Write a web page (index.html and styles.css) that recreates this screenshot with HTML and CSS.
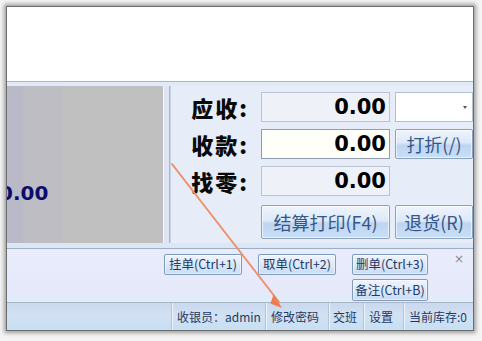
FILE: index.html
```html
<!DOCTYPE html>
<html>
<head>
<meta charset="utf-8">
<link rel="stylesheet" href="styles.css">
</head>
<body>
<div class="win">
  <div class="top"></div>
  <div class="main">
    <div class="display"><span class="bignum">0.00</span></div>
    <div class="splitter"></div>
    <div class="pay">
      <div class="lbl">应收:</div>
      <div class="inp ro">0.00</div>
      <div class="combo"><span class="caret"></span></div>
      <div class="lbl">收款:</div>
      <div class="inp edit">0.00</div>
      <div class="btn big">打折(/)</div>
      <div class="lbl">找零:</div>
      <div class="inp ro">0.00</div>
      <div></div>
      <div></div>
      <div class="btn big last">结算打印(F4)</div>
      <div class="btn big last">退货(R)</div>
    </div>
  </div>
  <div class="tools">
    <div class="tbtns">
      <div class="btn sm">挂单(Ctrl+1)</div>
      <div class="btn sm">取单(Ctrl+2)</div>
      <div class="btn sm">删单(Ctrl+3)</div>
      <div class="btn sm c3">备注(Ctrl+B)</div>
    </div>
    <span class="close">×</span>
  </div>
  <div class="status">
    <div class="item w1">收银员：admin</div>
    <div class="item w2">修改密码</div>
    <div class="item w3">交班</div>
    <div class="item w4">设置</div>
    <div class="item w5">当前库存:0</div>
  </div>
  <svg class="overlay" width="466" height="323" viewBox="0 0 466 323">
    <line x1="165" y1="157" x2="272" y2="295" stroke="#f0906a" stroke-width="2" stroke-linecap="round"/>
    <polygon points="275,301 266.5,287.5 263.5,296.5" fill="#f07c4c"/>
  </svg>
</div>
</body>
</html>
```

FILE: styles.css
```css
html, body {
  margin: 0;
  padding: 0;
}
body {
  width: 482px;
  height: 341px;
  background: #f4f4f4;
  overflow: hidden;
  font-family: "Noto Sans CJK SC", "DejaVu Sans", sans-serif;
}
.win {
  position: relative;
  margin: 6px 0 0 6px;
  width: 466px;
  height: 323px;
  border: 1px solid #6c6c6c;
  box-shadow: 0 0 4px 2px rgba(0,0,0,0.35);
  background: #fff;
  display: flex;
  flex-direction: column;
}
.top {
  height: 74px;
  background: #fff;
}
.main {
  height: 162px;
  border-top: 1px solid #a7b6cf;
  padding-top: 4px;
  background: linear-gradient(#e1ebf8, #dce7f5);
  display: flex;
}
.display {
  width: 156px;
  height: 157px;
  flex: none;
  background: linear-gradient(90deg, #bab9c8 0, #bab9c8 16px, #bebdc4 16px, #bebdc4 56px, #c1c0c1 56px);
  overflow: hidden;
  display: flex;
  align-items: center;
}
.bignum {
  font-family: "DejaVu Sans", sans-serif;
  font-weight: bold;
  font-size: 20px;
  color: #0c0c6e;
  margin-left: -8px;
  margin-top: 56px;
  line-height: 1;
}
.splitter {
  width: 5px;
  flex: none;
  height: 157px;
  border-left: 1px solid #f4f8fc;
  border-right: 1px solid #a9b8cc;
  background: #dfe6f1;
}
.pay {
  flex: 1;
  height: 157px;
  background: #e6edf9;
  border-left: 1px solid #c8d4e6;
  display: grid;
  grid-template-columns: 85px 129px 78px;
  column-gap: 5px;
  grid-template-rows: 30px 30px 30px 36px;
  row-gap: 7px;
  padding-top: 6px;
  box-sizing: border-box;
  align-content: start;
}
.lbl {
  display: flex;
  align-items: center;
  justify-content: flex-end;
  padding-right: 7px;
  font-family: "Noto Sans CJK SC", sans-serif;
  font-weight: 900;
  font-size: 22px;
  letter-spacing: 2px;
  color: #0a0a0a;
  line-height: 1;
}
.inp {
  box-sizing: border-box;
  border: 1px solid #b9c4d3;
  display: flex;
  align-items: center;
  justify-content: flex-end;
  padding-right: 3px;
  font-family: "DejaVu Sans", sans-serif;
  font-weight: bold;
  font-size: 21px;
  color: #000;
  line-height: 1;
}
.inp.ro {
  background: #eef2f8;
}
.inp.edit {
  background: #fffff9;
  border-color: #8f9db3;
}
.combo {
  box-sizing: border-box;
  border: 1px solid #b3c0d1;
  background: #fff;
  display: flex;
  align-items: center;
  justify-content: flex-end;
  padding-right: 5px;
}
.caret {
  width: 0;
  height: 0;
  border-left: 2px solid transparent;
  border-right: 2px solid transparent;
  border-top: 3px solid #555;
}
.btn {
  box-sizing: border-box;
  display: flex;
  align-items: center;
  justify-content: center;
  line-height: 1;
  white-space: nowrap;
}
.btn.big {
  border: 1px solid #8aa2c2;
  border-radius: 2px;
  background: linear-gradient(#eef4fc 0%, #dde9f8 45%, #bed5f1 55%, #cadff6 100%);
  box-shadow: inset 0 0 0 1px rgba(255,255,255,0.6);
  color: #34578a;
  font-size: 18px;
}
.btn.big.last {
  align-self: end;
  height: 34px;
}
.tools {
  border-top: 1px solid #9eadc4;
  border-bottom: 1px solid #a9b4c8;
  background: linear-gradient(#e9ecfb 0, #e5e9fa 80%, #dfeefa 100%);
  display: flex;
  align-items: flex-start;
  box-sizing: border-box;
  height: 55px;
}
.tbtns {
  margin-left: 157px;
  margin-top: 5px;
  display: grid;
  grid-template-columns: 78px 78px 76px;
  column-gap: 16px;
  grid-template-rows: 21px 22px;
  row-gap: 4px;
}
.btn.sm {
  border: 1px solid #7f9abf;
  border-radius: 2px;
  background: linear-gradient(#eef4fd 0%, #dde9f9 50%, #c9dcf4 100%);
  box-shadow: inset 0 0 0 1px rgba(255,255,255,0.5);
  color: #1f3a68;
  font-size: 12.5px;
}
.btn.c3 {
  grid-column: 3;
}
.close {
  margin-left: auto;
  margin-right: 9px;
  margin-top: 4px;
  font-family: "DejaVu Sans", sans-serif;
  font-size: 12px;
  color: #8c8c8c;
  line-height: 1;
}
.status {
  height: 27px;
  background: linear-gradient(#cbd8ee 0%, #d2e1f3 50%, #c6dff3 100%);
  display: flex;
  justify-content: flex-end;
  align-items: stretch;
}
.item {
  box-sizing: border-box;
  border-left: 1px solid #b3c2d8;
  box-shadow: inset 1px 0 0 #eef4fb;
  display: flex;
  align-items: center;
  padding-left: 5px;
  font-size: 12px;
  color: #1e3a62;
  white-space: nowrap;
  line-height: 1;
}
.w1 { width: 94px; }
.w2 { width: 63px; }
.w3 { width: 35px; padding-left: 4px; }
.w4 { width: 40px; }
.w5 { width: 70px; }
.overlay {
  position: absolute;
  left: 0;
  top: 0;
  pointer-events: none;
}
```
